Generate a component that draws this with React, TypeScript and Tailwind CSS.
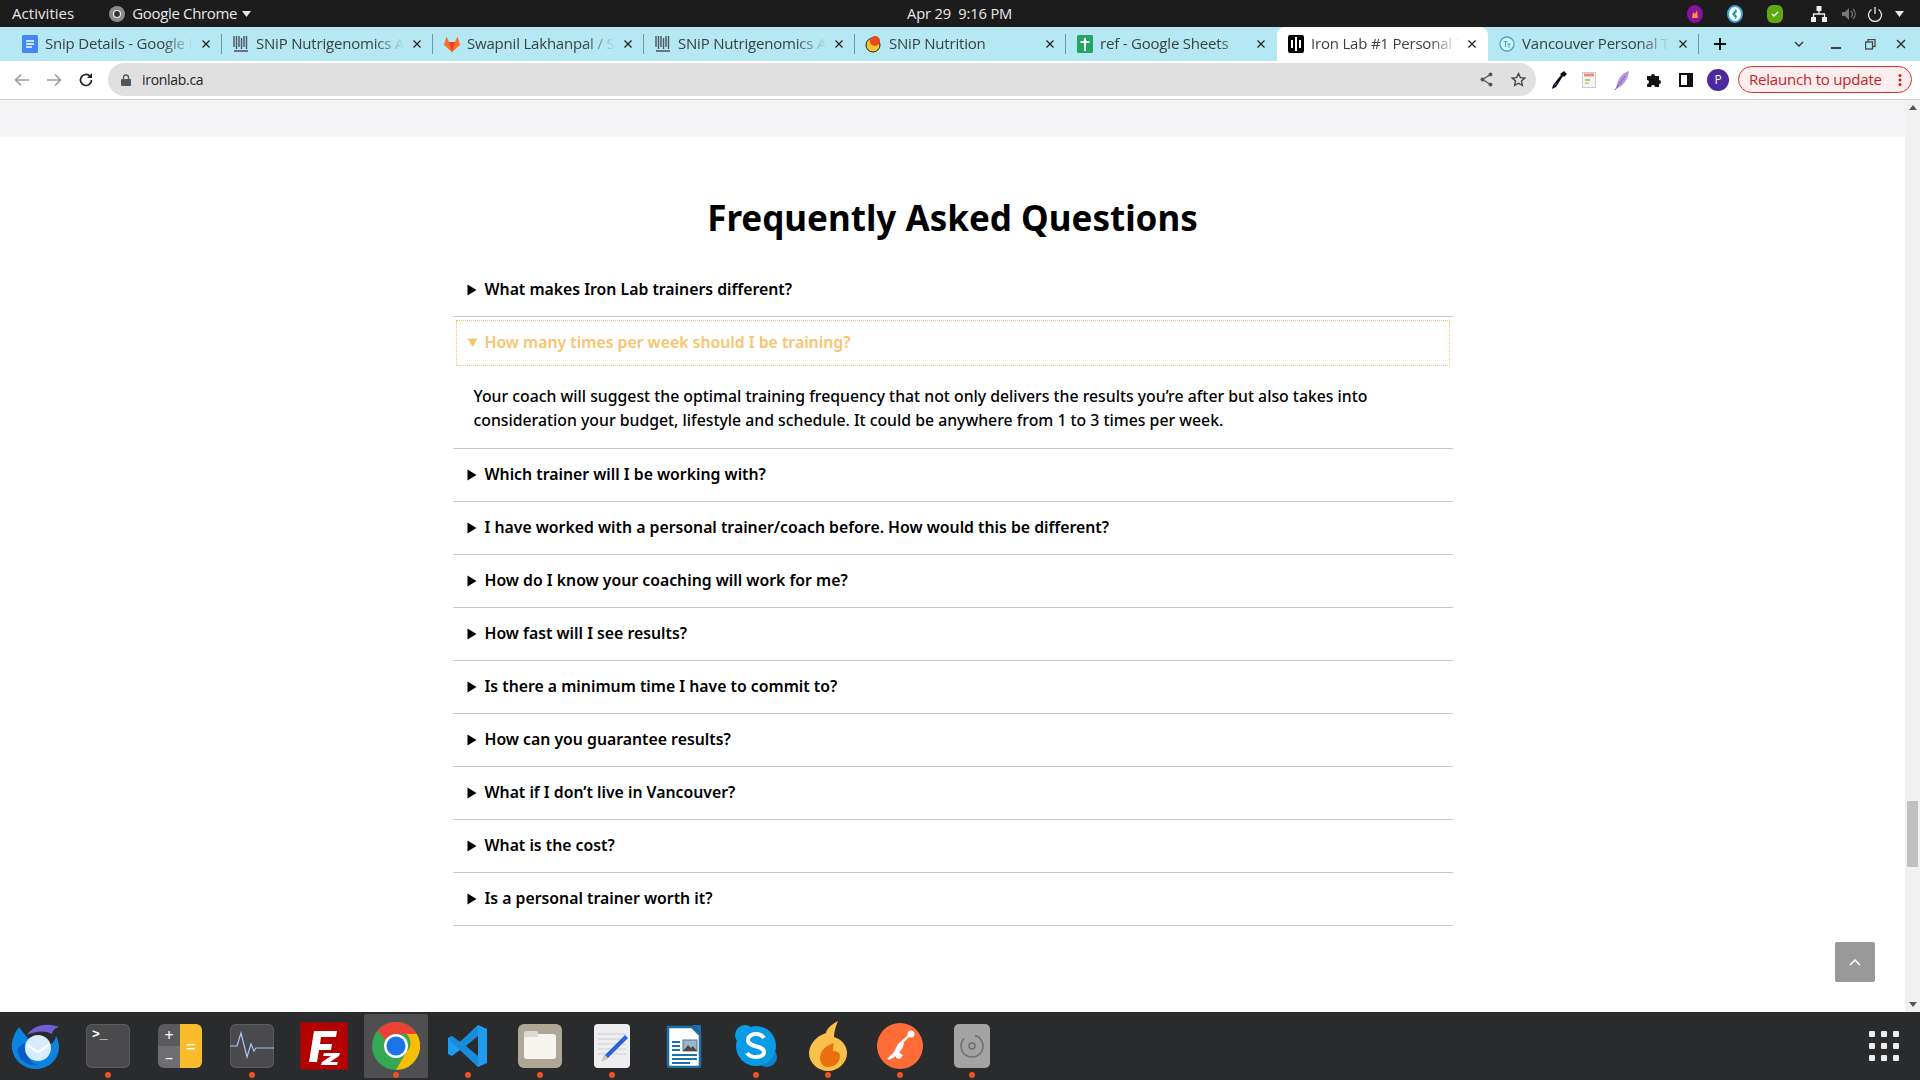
import React from 'react';

const faqs = [
  'What makes Iron Lab trainers different?',
  'How many times per week should I be training?',
  'Which trainer will I be working with?',
  'I have worked with a personal trainer/coach before. How would this be different?',
  'How do I know your coaching will work for me?',
  'How fast will I see results?',
  'Is there a minimum time I have to commit to?',
  'How can you guarantee results?',
  'What if I don’t live in Vancouver?',
  'What is the cost?',
  'Is a personal trainer worth it?',
];

function DocIcon() {
  return (
    <svg width="16" height="18" viewBox="0 0 16 18">
      <rect x="0" y="0" width="16" height="18" rx="1.500" fill="#4285f4" />
      <path d="M4 6h8M4 9h8M4 12h6" stroke="#fff" strokeWidth="1.500" />
    </svg>
  );
}

function SnipIcon() {
  return (
    <svg width="16" height="18" viewBox="0 0 16 18">
      <path d="M1 1v11M3.500 1v13M6 1v11M8.500 3v11M11 1v11M13.500 1v13" stroke="#4b5563" strokeWidth="1.400" />
      <path d="M1 16h14" stroke="#6b7280" strokeWidth="2" />
    </svg>
  );
}

function GitlabIcon() {
  return (
    <svg width="18" height="18" viewBox="0 0 18 18">
      <path d="M1 10 3.500 1.500 6 7h6l2.500-5.500L17 10l-8 7z" fill="#fc6d26" />
      <path d="M6 7h6l-3 10z" fill="#e24329" />
    </svg>
  );
}

function NutritionIcon() {
  return (
    <svg width="18" height="18" viewBox="0 0 18 18">
      <circle cx="8" cy="10" r="7" fill="#f9c22e" stroke="#222" strokeWidth="1" />
      <circle cx="10" cy="6" r="5" fill="#ea4a1f" />
    </svg>
  );
}

function SheetsIcon() {
  return (
    <svg width="16" height="18" viewBox="0 0 16 18">
      <rect width="16" height="18" rx="1.500" fill="#23a566" />
      <path d="M8 3v13M3.500 7h9" stroke="#fff" strokeWidth="2" />
    </svg>
  );
}

function IronLabIcon() {
  return (
    <svg width="16" height="18" viewBox="0 0 16 18">
      <rect width="16" height="18" rx="2" fill="#000" />
      <path d="M4 5v8M8 2v14M12 5v8" stroke="#fff" strokeWidth="2" />
    </svg>
  );
}

function VancouverIcon() {
  return (
    <svg width="16" height="16" viewBox="0 0 16 16">
      <circle cx="8" cy="8" r="7" fill="#d8f4fb" stroke="#3fa9d8" strokeWidth="1.300" />
      <path d="M4.500 5.500h4M6.500 5.500v5.500M8 8h4M10 8v4" stroke="#3fa9d8" strokeWidth="1" />
    </svg>
  );
}

const tabs = [
  { title: 'Snip Details - Google Docs', icon: <DocIcon /> },
  { title: 'SNiP Nutrigenomics Admin', icon: <SnipIcon /> },
  { title: 'Swapnil Lakhanpal / Snip', icon: <GitlabIcon /> },
  { title: 'SNiP Nutrigenomics Admin', icon: <SnipIcon /> },
  { title: 'SNiP Nutrition', icon: <NutritionIcon /> },
  { title: 'ref - Google Sheets', icon: <SheetsIcon /> },
  { title: 'Iron Lab #1 Personal Trainer', icon: <IronLabIcon />, active: true },
  { title: 'Vancouver Personal Trainer', icon: <VancouverIcon /> },
];

function Tab({ title, icon, active, last }: { title: string; icon: React.ReactNode; active?: boolean; last?: boolean }) {
  return (
    <div className={`relative flex h-[34px] w-[211px] shrink-0 items-center pl-[10px] pr-[11px] ${active ? 'rounded-t-[8px] bg-white' : ''}`}>
      <div className="flex w-[18px] shrink-0 justify-center">{icon}</div>
      <span className="ml-[6px] -mt-[1px] min-w-0 flex-1 overflow-hidden whitespace-nowrap text-[15px] text-[#3c4043] [mask-image:linear-gradient(to_right,black_80%,transparent)]">
        {title}
      </span>
      <svg className="ml-[8px] shrink-0" width="10" height="10" viewBox="0 0 10 10">
        <path d="M1.500 1.500l7 7M8.500 1.500l-7 7" stroke="#222" strokeWidth="1.300" />
      </svg>
      {!active && !last && <div className="absolute right-0 top-[7px] h-[20px] w-px bg-[#6f9aa3]" />}
    </div>
  );
}

function DockItem({ children, dot, active }: { children: React.ReactNode; dot?: boolean; active?: boolean }) {
  return (
    <div className="relative flex h-[68px] w-[72px] shrink-0 items-center justify-center">
      {active && <div className="absolute left-[4px] top-[2px] h-[64px] w-[64px] rounded-[2px] bg-[#4f4f52]" />}
      <div className="relative -mt-[1px]">{children}</div>
      {dot && <div className="absolute bottom-[2px] left-[33px] h-[6px] w-[6px] rounded-full bg-[#e95420]" />}
    </div>
  );
}

function TerminalTile({ children }: { children: React.ReactNode }) {
  return <div className="relative h-[44px] w-[44px] rounded-[6px] bg-[#4a4a4c] shadow-[inset_0_0_0_1px_#5c5c5e]">{children}</div>;
}

function Dock() {
  return (
    <div className="flex h-[68px] shrink-0 items-center justify-between bg-[#2a2b2d] pr-[19px]">
      <div className="flex">
        <DockItem>
          <svg width="50" height="50" viewBox="0 0 50 50">
            <path d="M8 6c-6 8-8 16-7 22 2 12 12 20 24 20s23-9 23-22c0-4-1-8-3-11-1 5-4 9-9 10-6 1-14-3-18-7-4-4-7-8-10-12z" fill="#0a84e0" />
            <path d="M16 14c6-9 18-13 32-8-4 1-6 3-7 7-7-4-16-3-25 1z" fill="#6f5fd8" />
            <path d="M14 22c-2 10 4 20 14 22-8 2-18-2-21-12-1-5 2-8 7-10z" fill="#0a5cc0" />
            <circle cx="27" cy="27" r="13" fill="#d9ecff" />
            <path d="M15 23l12 8 12-8" fill="none" stroke="#ffffff" strokeWidth="2" />
          </svg>
        </DockItem>
        <DockItem dot>
          <TerminalTile>
            <span className="absolute left-[6px] top-[2px] font-['Liberation_Mono',monospace] text-[13px] font-bold leading-[18px] text-white">&gt;_</span>
          </TerminalTile>
        </DockItem>
        <DockItem>
          <div className="flex h-[44px] w-[44px] overflow-hidden rounded-[6px]">
            <div className="flex w-[22px] flex-col">
              <div className="flex h-[22px] items-center justify-center bg-[#5a5a5c] text-[16px] leading-none text-white">+</div>
              <div className="flex h-[22px] items-center justify-center bg-[#6e6e70] text-[16px] leading-none text-white">–</div>
            </div>
            <div className="flex w-[22px] items-center justify-center bg-[#fbbc2c] text-[18px] leading-none text-white">=</div>
          </div>
        </DockItem>
        <DockItem dot>
          <TerminalTile>
            <svg className="absolute inset-0" width="44" height="44" viewBox="0 0 44 44">
              <path d="M0 22h7l4-13 6 24 4-13 3 7 2-3h18" fill="none" stroke="#a9c4f5" strokeWidth="1.200" />
            </svg>
          </TerminalTile>
        </DockItem>
        <DockItem>
          <svg width="48" height="48" viewBox="0 0 48 48">
            <rect x="1" y="1" width="46" height="46" fill="#b50000" stroke="#b50000" strokeWidth="2" strokeDasharray="3 2" />
            <path d="M9 40 14 9h23l-1 6H21l-1 7h12l-1 6H19l-2 12z" fill="#fff" />
            <path d="M24 31h16l-1 3-9 6h8l-1 3H21l1-3 9-6h-8z" fill="#fff" />
          </svg>
        </DockItem>
        <DockItem dot active>
          <svg width="48" height="48" viewBox="0 0 48 48">
            <circle cx="24" cy="24" r="24" fill="#34a853" />
            <path d="M24 0a24 24 0 0 1 20.800 12H24a12 12 0 0 0-10.400 6L5.500 8.500A24 24 0 0 1 24 0z" fill="#ea4335" />
            <path d="M44.800 12A24 24 0 0 1 24 48l10.400-18a12 12 0 0 0 0-18z" fill="#fbbc04" />
            <circle cx="24" cy="24" r="12" fill="#fff" />
            <circle cx="24" cy="24" r="9.500" fill="#1a73e8" />
          </svg>
        </DockItem>
        <DockItem dot>
          <svg width="44" height="44" viewBox="0 0 44 44">
            <path d="M32 1 41 5v34l-9 4-18-17-8 6-4-2V14l4-2 8 6z" fill="#1f9cf0" />
            <path d="M32 1 14 18 6 12l-4 2 12 12L32 43z" fill="#0e7dc8" opacity="0.500" />
            <path d="M32 12 20 22l12 10z" fill="#2a2b2d" />
          </svg>
        </DockItem>
        <DockItem dot>
          <div className="flex h-[44px] w-[44px] items-center justify-center rounded-[6px] bg-[#aea795]">
            <div className="relative mt-[2px] h-[25px] w-[32px] rounded-[3px] bg-[#f6f4ef]">
              <div className="absolute -top-[3px] left-0 h-[6px] w-[14px] rounded-t-[2px] bg-[#dedad0]" />
            </div>
          </div>
        </DockItem>
        <DockItem dot>
          <div className="relative h-[44px] w-[36px] rounded-[4px] bg-[#eeeef0]">
            <svg className="absolute inset-0" width="36" height="44" viewBox="0 0 36 44">
              <path d="M4 10h28M4 15h28M4 20h28M4 25h28M4 30h28" stroke="#cfcfd2" strokeWidth="1" />
              <path d="M31 11 11 31l-3 6 6-3 20-20z" fill="#2c62d8" />
              <path d="M8 37l3-6 3 3z" fill="#e8c9a0" />
            </svg>
          </div>
        </DockItem>
        <DockItem>
          <svg width="36" height="44" viewBox="0 0 36 44">
            <path d="M2 3h24l8 8v30a2 2 0 0 1-2 2H4a2 2 0 0 1-2-2z" fill="#fff" stroke="#1d6fa8" strokeWidth="2.500" />
            <path d="M26 1h9v9z" fill="#1d6fa8" />
            <path d="M6 18h8M6 22h8M6 26h8M6 31h25M6 35h25M6 39h18" stroke="#1d6fa8" strokeWidth="2" />
            <rect x="17" y="16" width="14" height="11" fill="#9bb7d0" stroke="#5b7287" />
            <path d="M17 27l5-6 3 3 2-2 4 5z" fill="#4a4a4a" />
          </svg>
        </DockItem>
        <DockItem dot>
          <svg width="44" height="44" viewBox="0 0 44 44">
            <circle cx="11" cy="11" r="10" fill="#0a9fe0" />
            <circle cx="33" cy="33" r="10" fill="#0a84cf" />
            <circle cx="22" cy="22" r="20" fill="#0a9be6" />
            <path d="M30 14c-2-3-5-4-8-4-5 0-8 3-8 6 0 8 16 5 16 12 0 3-3 5-8 5-3 0-7-1-9-4" fill="none" stroke="#fff" strokeWidth="4" />
          </svg>
        </DockItem>
        <DockItem dot>
          <svg width="40" height="50" viewBox="0 0 40 50">
            <path d="M30 0c-8 4-12 9-12 12C8 15 1 24 1 32c0 10 9 18 19 18s19-8 19-18c0-8-6-14-13-16 0-6 2-11 4-16z" fill="#f9c14a" />
            <path d="M26 22c-8 2-14 8-14 15 0 6 4 9 8 9 6 0 12-4 12-11 0-4-4-5-7-5 0-3 0-5 1-8z" fill="#e8700f" />
          </svg>
        </DockItem>
        <DockItem dot>
          <svg width="46" height="46" viewBox="0 0 46 46">
            <circle cx="23" cy="23" r="23" fill="#ff6c37" />
            <path d="M31 12 21 21l-4 8-7 7 2 1 9-5 5-8 1-5 6-6z" fill="#fff" />
            <circle cx="34" cy="11" r="3.500" fill="#fff" />
            <path d="M19 28l7 4-3 4-4-1z" fill="#fff" />
          </svg>
        </DockItem>
        <DockItem dot>
          <div className="flex h-[44px] w-[36px] items-center justify-center rounded-[5px] bg-[#a3a3a3]">
            <svg width="26" height="26" viewBox="0 0 26 26">
              <circle cx="13" cy="13" r="3" fill="none" stroke="#6d6d6d" strokeWidth="1.500" />
              <path d="M16 2.500A11 11 0 1 1 5 5.500" fill="none" stroke="#6d6d6d" strokeWidth="1.500" />
            </svg>
          </div>
        </DockItem>
      </div>
      <div className="grid grid-cols-3 gap-[6px] pr-[2px]">
        {Array.from({ length: 9 }).map((_, i) => (
          <div key={i} className="h-[6px] w-[6px] rounded-[1px] bg-[#ececec]" />
        ))}
      </div>
    </div>
  );
}

export default function App() {
  return (
    <div className="relative flex h-[1080px] w-[1920px] flex-col overflow-hidden bg-white font-['Noto_Sans',sans-serif]">
      {/* top bar */}
      <div className="relative flex h-[27px] shrink-0 items-center justify-between bg-[#1c1c1c] pl-[12px] pr-[16px] text-[15px] text-[#e8e8e8] [font-family:'Open_Sans',sans-serif]">
        <div className="flex items-center">
          <span className="tracking-[0.05px]">Activities</span>
          <svg className="ml-[35px]" width="16" height="16" viewBox="0 0 16 16">
            <circle cx="8" cy="8" r="8" fill="#8a8a8a" />
            <circle cx="8" cy="8" r="3.500" fill="#333" stroke="#eee" strokeWidth="1.200" />
          </svg>
          <span className="ml-[7px] tracking-[-0.35px]">Google Chrome</span>
          <svg className="ml-[5px]" width="9" height="6" viewBox="0 0 9 6"><path d="M0 0h9L4.500 6z" fill="#e8e8e8" /></svg>
        </div>
        <div className="absolute left-[907px] text-[14.700px] tracking-[-0.15px]">Apr 29&nbsp;&nbsp;9:16 PM</div>
        <div className="flex items-center">
          <svg width="16" height="18" viewBox="0 0 16 18"><ellipse cx="8" cy="9" rx="8" ry="9" fill="#8b12a0" /><path d="M5 13l1-6 2 2 2-4 1 8z" fill="#f59a23" /></svg>
          <svg className="ml-[24px]" width="16" height="18" viewBox="0 0 16 18"><ellipse cx="8" cy="9" rx="7" ry="8" fill="#fff" stroke="#3aa7dd" strokeWidth="2" /><path d="M9 4 5 9l4 5 1-3-2-2 2-2z" fill="#13a89e" /></svg>
          <svg className="ml-[24px]" width="16" height="18" viewBox="0 0 16 18"><rect width="16" height="18" rx="6" fill="#5fa813" /><path d="M5 9l2 2 4-4" fill="none" stroke="#fff" strokeWidth="1.500" /></svg>
          <svg className="ml-[28px]" width="16" height="16" viewBox="0 0 16 16" fill="#eee"><rect x="5.500" y="0" width="5" height="5" /><rect x="0" y="11" width="5" height="5" /><rect x="11" y="11" width="5" height="5" /><path d="M8 5v3M2.500 11V8h11v3" fill="none" stroke="#eee" strokeWidth="1.300" /></svg>
          <svg className="ml-[15px]" width="14" height="14" viewBox="0 0 14 14"><path d="M0 5h3l4-4v12l-4-4H0z" fill="#777" /><path d="M9 4c2 2 2 4 0 6M11 2c3 3 3 7 0 10" fill="none" stroke="#777" strokeWidth="1.200" /></svg>
          <svg className="ml-[11px]" width="16" height="16" viewBox="0 0 16 16"><path d="M4.500 3.500a6.500 6.500 0 1 0 7 0M8 1v7" fill="none" stroke="#e8e8e8" strokeWidth="1.300" /></svg>
          <svg className="ml-[12px]" width="9" height="6" viewBox="0 0 9 6"><path d="M0 0h9L4.500 6z" fill="#e8e8e8" /></svg>
        </div>
      </div>

      {/* tab strip */}
      <div className="flex h-[34px] shrink-0 items-center bg-[#b5e8f2] pl-[11px] [font-family:'Open_Sans',sans-serif] tracking-[-0.2px]">
        {tabs.map((t, i) => (
          <Tab key={i} title={t.title} icon={t.icon} active={t.active} last={i === 5} />
        ))}
        <svg className="ml-[15px]" width="12" height="12" viewBox="0 0 12 12"><path d="M6 0v12M0 6h12" stroke="#111" strokeWidth="2" /></svg>
        <svg className="ml-[68px]" width="10" height="6" viewBox="0 0 10 6"><path d="M1 1l4 4 4-4" fill="none" stroke="#333" strokeWidth="1.300" /></svg>
        <svg className="ml-[27px]" width="10" height="10" viewBox="0 0 10 10"><path d="M0 9h10" stroke="#444" strokeWidth="2" /></svg>
        <svg className="ml-[24px]" width="11" height="11" viewBox="0 0 11 11"><rect x="3" y="0.500" width="7" height="7" fill="none" stroke="#444" strokeWidth="1.300" /><rect x="0.500" y="3" width="7" height="7" fill="#b5e8f2" stroke="#444" strokeWidth="1.300" /></svg>
        <svg className="ml-[20px]" width="10" height="10" viewBox="0 0 10 10"><path d="M1 1l8 8M9 1l-8 8" stroke="#333" strokeWidth="1.500" /></svg>
      </div>

      {/* toolbar */}
      <div className="flex h-[39px] shrink-0 items-center border-b border-[#cfcfcf] bg-white pl-[14px] pb-px [font-family:'Open_Sans',sans-serif]">
        <svg width="16" height="14" viewBox="0 0 16 14"><path d="M15 7H2M7 1.500 1.500 7 7 12.500" fill="none" stroke="#9a9a9a" strokeWidth="1.600" /></svg>
        <svg className="ml-[16px]" width="16" height="14" viewBox="0 0 16 14"><path d="M1 7h13M9 1.500 14.500 7 9 12.500" fill="none" stroke="#9a9a9a" strokeWidth="1.600" /></svg>
        <svg className="ml-[16px]" width="16" height="16" viewBox="0 0 16 16"><path d="M13.500 8a5.500 5.500 0 1 1-1.600-3.900" fill="none" stroke="#222" strokeWidth="1.700" /><path d="M14 1v5H9z" fill="#222" /></svg>
        <div className="ml-[14px] flex h-[33px] w-[1428px] shrink-0 items-center rounded-full bg-[#e0e0e0] pl-[13px] pr-[10px]">
          <svg width="10" height="12" viewBox="0 0 10 12"><rect y="5" width="10" height="7" rx="1" fill="#555" /><path d="M2.500 5V3.500a2.500 2.500 0 0 1 5 0V5" fill="none" stroke="#555" strokeWidth="1.300" /></svg>
          <span className="ml-[11px] text-[14px] tracking-[-0.3px] text-[#222]">ironlab.ca</span>
          <div className="ml-auto flex items-center gap-[17px]">
            <svg width="15" height="15" viewBox="0 0 15 15"><path d="M11.500 2.500 3.500 7.500l8 5" fill="none" stroke="#555" strokeWidth="1.300" /><circle cx="11.500" cy="2.500" r="2" fill="#555" /><circle cx="3.500" cy="7.500" r="2" fill="#555" /><circle cx="11.500" cy="12.500" r="2" fill="#555" /></svg>
            <svg width="15" height="15" viewBox="0 0 24 24"><path d="M12 2.500l3 6.500 7 .8-5.200 4.700 1.400 7L12 17.900l-6.200 3.600 1.400-7L2 9.800 9 9z" fill="none" stroke="#444" strokeWidth="2.200" /></svg>
          </div>
        </div>
        <svg className="ml-[14px]" width="18" height="20" viewBox="0 0 18 20"><path d="M14 1l3 3-3 3-1-1-7 11-4 2 1-4 8-10-1-1z" fill="#111" /><path d="M4 16l1-3 2 1z" fill="#2a5bd7" /></svg>
        <svg className="ml-[14px]" width="14" height="16" viewBox="0 0 14 16"><rect x="0.500" y="0.500" width="13" height="15" fill="#f4f4f4" stroke="#ccc" /><path d="M2 3h10" stroke="#f08a7a" strokeWidth="3" /><path d="M3 8h5" stroke="#7fc36b" strokeWidth="1.500" /><path d="M3 11h4" stroke="#e3c84b" strokeWidth="1.500" /></svg>
        <svg className="ml-[18px]" width="16" height="20" viewBox="0 0 16 20"><path d="M15 1C8 3 3 9 2 19 9 16 14 10 15 1z" fill="#b595dd" /><path d="M1 20 11 6" stroke="#7e57b8" strokeWidth="1" /></svg>
        <svg className="ml-[17px]" width="14" height="14" viewBox="0 0 14 14"><path d="M0 3h4a2 2 0 0 1 4 0h4v4a2 2 0 0 1 0 4v3H8a2 2 0 0 0-4 0H0v-3a2 2 0 0 0 0-4z" fill="#111" /></svg>
        <svg className="ml-[18px]" width="14" height="14" viewBox="0 0 14 14"><rect x="1" y="1" width="12" height="12" fill="none" stroke="#111" strokeWidth="2" /><rect x="8" y="1" width="4" height="12" fill="#111" /></svg>
        <div className="ml-[14px] flex h-[22px] w-[22px] items-center justify-center rounded-full bg-[#4c2a9e] text-[12px] leading-none text-white">P</div>
        <div className="ml-[9px] flex h-[27px] w-[174px] items-center justify-between rounded-full border border-[#d93025] bg-[#fceeee] pl-[10px] pr-[9px] text-[15px] tracking-[-0.2px] text-[#c5221f]">
          <span>Relaunch to update</span>
          <svg width="4" height="14" viewBox="0 0 4 14" fill="#c5221f"><circle cx="2" cy="2.500" r="1.500" /><circle cx="2" cy="7" r="1.500" /><circle cx="2" cy="11.500" r="1.500" /></svg>
        </div>
      </div>

      {/* page */}
      <div className="flex min-h-0 flex-1">
        <div className="min-w-0 flex-1">
          <div className="h-[37px] bg-[#f5f5f7]" />
          <h2 className="mt-[55px] text-center text-[35px] font-bold leading-[52px] text-black">Frequently Asked Questions</h2>
          <div className="mx-auto mt-[20px] w-[1000px]">
            {faqs.map((q, i) =>
              i === 1 ? (
                <div key={i} className="border-b border-[#c8c8c8]">
                  <div className="mx-[3px] mt-[3px] flex h-[46px] items-center border border-dotted border-[#f6c26b] pl-[10px]">
                    <svg width="12" height="10" viewBox="0 0 12 10"><path d="M0.500 0.500h10L5.500 9z" fill="#f8c46e" /></svg>
                    <span className="ml-[6px] text-[15.800px] font-semibold text-[#f8c46e]">{q}</span>
                  </div>
                  <p className="pb-[16px] pl-[21px] pr-[60px] pt-[18px] text-[15.800px] font-medium leading-[24px] text-black">
                    Your coach will suggest the optimal training frequency that not only delivers the results you’re after but also takes into consideration your budget, lifestyle and schedule. It could be anywhere from 1 to 3 times per week.
                  </p>
                </div>
              ) : (
                <div key={i} className="flex h-[53px] items-center border-b border-[#c8c8c8] pl-[14px]">
                  <svg width="10" height="12" viewBox="0 0 10 12"><path d="M0.500 0.500 9.500 6l-9 5.500z" fill="#000" /></svg>
                  <span className="ml-[8px] text-[15.800px] font-semibold text-black">{q}</span>
                </div>
              ),
            )}
          </div>
        </div>

        {/* scrollbar */}
        <div className="flex w-[15px] shrink-0 flex-col items-center justify-between bg-[#f1f1f1] py-[5px]">
          <svg width="8" height="5" viewBox="0 0 8 5"><path d="M4 0l4 5H0z" fill="#555" /></svg>
          <svg width="8" height="5" viewBox="0 0 8 5"><path d="M0 0h8L4 5z" fill="#555" /></svg>
        </div>
      </div>

      {/* overlay bits: scroll thumb and back to top button */}
      <div className="absolute left-[1907px] top-[801px] h-[66px] w-[11px] bg-[#c1c1c1]" />
      <button className="absolute left-[1835px] top-[942px] flex h-[40px] w-[40px] items-center justify-center rounded-[2px] bg-[#999999]">
        <svg width="12" height="8" viewBox="0 0 12 8"><path d="M1 7l5-5 5 5" fill="none" stroke="#fff" strokeWidth="1.500" /></svg>
      </button>

      <Dock />
    </div>
  );
}
